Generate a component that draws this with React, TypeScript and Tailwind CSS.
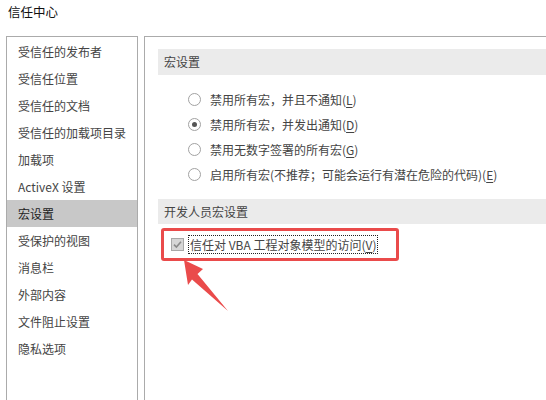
import React from 'react';

const font = { fontFamily: '"Microsoft YaHei", "Noto Sans CJK SC", "Noto Sans", sans-serif' };

const navItems = [
  '受信任的发布者',
  '受信任位置',
  '受信任的文档',
  '受信任的加载项目录',
  '加载项',
  'ActiveX 设置',
  '宏设置',
  '受保护的视图',
  '消息栏',
  '外部内容',
  '文件阻止设置',
  '隐私选项',
];

const radios = [
  { pre: '禁用所有宏，并且不通知(', key: 'L', checked: false },
  { pre: '禁用所有宏，并发出通知(', key: 'D', checked: true },
  { pre: '禁用无数字签署的所有宏(', key: 'G', checked: false },
  { pre: '启用所有宏(不推荐；可能会运行有潜在危险的代码)(', key: 'E', checked: false },
];

function Radio({ checked }: { checked: boolean }) {
  return (
    <span className="w-[13px] h-[13px] rounded-full border border-[#a2a2a2] bg-white flex items-center justify-center shrink-0">
      {checked && <span className="w-[5px] h-[5px] rounded-full bg-[#555]" />}
    </span>
  );
}

export default function App() {
  return (
    <div className="w-[546px] h-[400px] overflow-hidden bg-white relative flex flex-col text-[12px] text-[#444]" style={font}>
      {/* title */}
      <div className="h-[36px] pl-[8px] pt-[4px] leading-[16px] text-[12.5px] text-[#111] shrink-0">信任中心</div>

      <div className="flex flex-1 min-h-0">
        {/* left nav */}
        <div className="ml-[6px] w-[132px] border border-b-0 border-[#ababab] pt-[1px] shrink-0">
          {navItems.map((item) => (
            <div
              key={item}
              className={`h-[27px] pl-[11px] flex items-center leading-none ${item === '宏设置' ? 'bg-[#c8c8c8] text-[#222]' : ''}`}
            >
              {item}
            </div>
          ))}
        </div>

        {/* right content */}
        <div className="ml-[6px] flex-1 border-l border-t border-[#ababab] pt-[12px] pl-[13px]">
          <div className="h-[26px] bg-[#ebebeb] pl-[6px] flex items-center text-[#444]">宏设置</div>

          <div className="mt-[12px] pl-[30px]">
            {radios.map((r) => (
              <div key={r.key} className="h-[25px] flex items-center gap-[9px]">
                <Radio checked={r.checked} />
                <span className="leading-none">
                  {r.pre}
                  <span className="underline underline-offset-2">{r.key}</span>)
                </span>
              </div>
            ))}
          </div>

          <div className="mt-[12px] h-[25px] bg-[#ebebeb] pl-[6px] flex items-center text-[#444]">开发人员宏设置</div>

          <div className="mt-[11px] pl-[13px] flex items-center gap-[4px]">
            <span className="w-[13px] h-[13px] border border-[#a8a8a8] bg-[#d6d6d6] flex items-center justify-center shrink-0">
              <svg width="9" height="9" viewBox="0 0 9 9">
                <path d="M1 4.6 L3.4 7 L8 1.8" fill="none" stroke="#8a8a8a" strokeWidth="1.6" />
              </svg>
            </span>
            <span className="h-[19px] px-[1px] border border-dotted border-[#222] flex items-center leading-none">
              信任对 VBA 工程对象模型的访问(<span className="underline underline-offset-2">V</span>)
            </span>
          </div>
        </div>
      </div>

      {/* annotation: red box */}
      <div className="absolute left-[161px] top-[228px] w-[238px] h-[33px] border-[3px] border-[#ea4b4b] rounded-[3px]" />

      {/* annotation: arrow */}
      <svg className="absolute left-0 top-0" width="546" height="400" viewBox="0 0 546 400">
        <polygon
          points="184,260 203,269 197.5,274 228,311 192,279.5 188,285"
          fill="#ea4b4b"
        />
      </svg>
    </div>
  );
}
